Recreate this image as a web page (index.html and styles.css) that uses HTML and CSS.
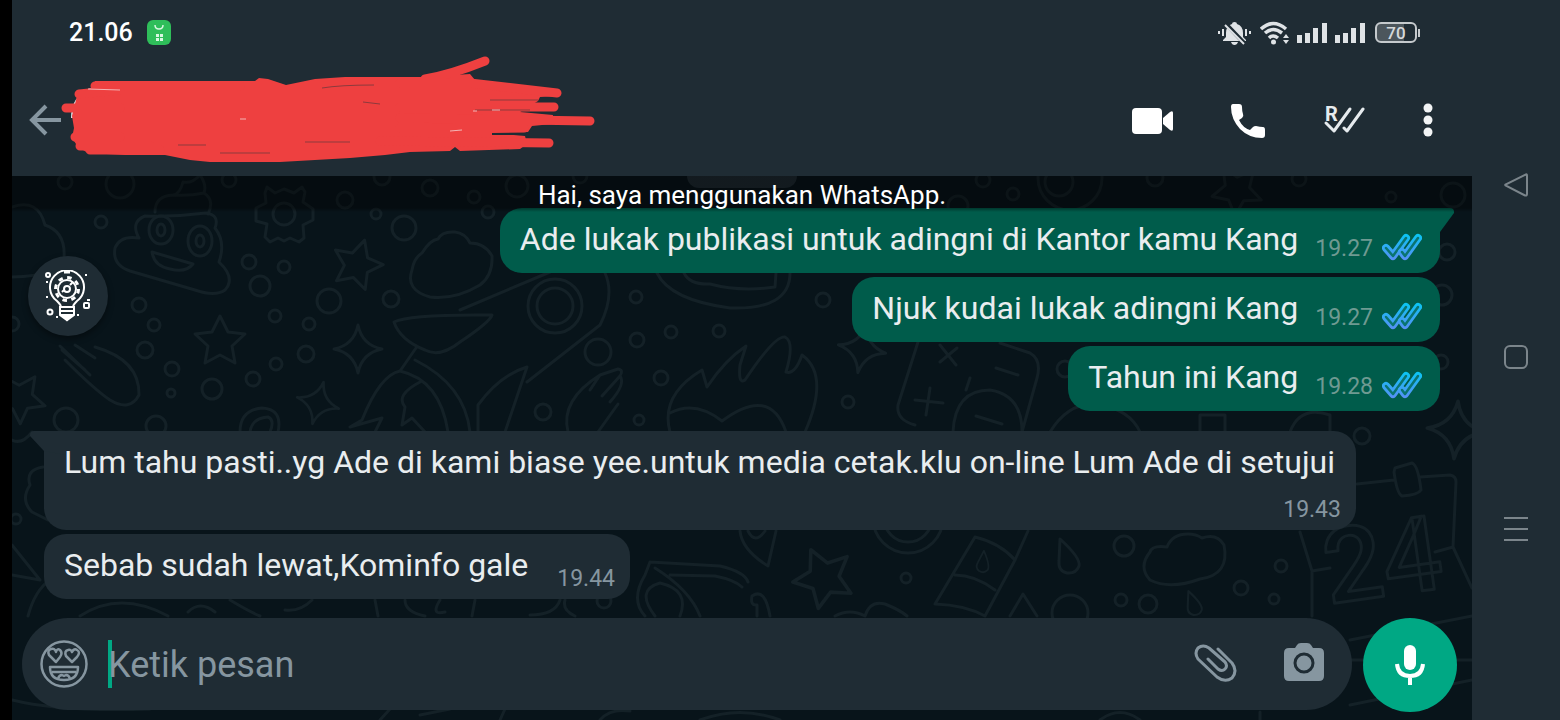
FILE: index.html
```html
<!DOCTYPE html>
<html lang="id">
<head>
  <meta charset="UTF-8" />
  <meta name="viewport" content="width=device-width, initial-scale=1.0" />
  <title>WhatsApp</title>
  <link rel="stylesheet" href="styles.css">
</head>
<body>

  <!-- Shared shapes -->
  <svg class="defs" aria-hidden="true">
    <defs>
      <linearGradient id="tick-blue" gradientUnits="userSpaceOnUse" x1="0" y1="0" x2="0" y2="28">
        <stop offset="0" stop-color="#06c8f2" />
        <stop offset="1" stop-color="#5b8df5" />
      </linearGradient>
      <symbol id="ticks" viewBox="0 0 40 28">
        <g fill="none" stroke-linecap="round" stroke-linejoin="round">
          <path d="M4 15L11 23L24 5" stroke="url(#tick-blue)" stroke-width="8" />
          <path d="M4 15L11 23L24 5" stroke="#0a7470" stroke-width="2.500" />
          <path d="M20 19L23 23L36 5" stroke="url(#tick-blue)" stroke-width="8" />
          <path d="M20 19L23 23L36 5" stroke="#0a7470" stroke-width="2.500" />
        </g>
      </symbol>
      <symbol id="signal" viewBox="0 0 30 22">
        <path fill="#dfe3e6" d="M0 13h5v8H0zM8 11h5v10H8zM16 6h5v15h-5zM25 1h5v20h-5z" />
      </symbol>
      <path id="star" d="M0-26L8-10L25-8L12 4L15 21L0 13L-15 21L-12 4L-25-8L-8-10Z" />
      <path id="spark" d="M0-24Q4-4 24 0Q4 4 0 24Q-4 4-24 0Q-4-4 0-24Z" />
      <path id="drop" d="M-8-17Q13 2 11 10Q8 18-1 17Q-10 15-9 5Z" />
    </defs>
  </svg>

  <div class="app">
    <header class="header">
      <div class="status-bar">
        <span class="clock">21.06</span>
        <svg class="notif" width="24" height="26" viewBox="0 0 24 26">
          <rect width="24" height="25" rx="6" fill="#2fbe5a" />
          <path d="M8 5Q8 9 12 9Q16 9 16 5" fill="none" stroke="#d9f7e2" stroke-width="1.5" />
          <path d="M9 14h3v3H9zM13 14h3v3h-3zM9 18h3v3H9zM13 18h3v3h-3z" fill="#d9f7e2" />
        </svg>
        <div class="status-icons">
          <svg width="33" height="24" viewBox="0 0 33 24">
            <path d="M16.500 1Q19 1 19 3Q25 5 25 12V16L28 19V20H5V19L8 16V12Q8 5 14 3Q14 1 16.500 1ZM13 21h7q-1 3-3.500 3T13 21Z" fill="#dfe3e6" />
            <path d="M7 2L28 24" stroke="#1f2c34" stroke-width="4" />
            <path d="M7 4L26 23" stroke="#dfe3e6" stroke-width="2" />
            <path d="M5 8v7M28 8v7M1 10v3M32 10v3" stroke="#dfe3e6" stroke-width="2" />
          </svg>
          <svg class="wifi" width="31" height="24" viewBox="0 0 31 24">
            <g fill="none" stroke="#dfe3e6" stroke-width="3.500">
              <path d="M1 8Q13-3 26 8" />
              <path d="M5 12Q13 5 22 12" />
              <path d="M9 17Q13 13 18 17" />
            </g>
            <circle cx="13.500" cy="21" r="2.500" fill="#dfe3e6" />
            <path d="M23 17l3-4 3 4zM23 19l3 4 3-4z" fill="#dfe3e6" />
          </svg>
          <svg class="bars" width="30" height="22"><use href="#signal" /></svg>
          <svg class="bars" width="30" height="22"><use href="#signal" /></svg>
          <span class="battery">70</span>
        </div>
      </div>

      <div class="toolbar">
        <button class="back" aria-label="Kembali">
          <svg width="32" height="32" viewBox="0 0 32 32" fill="none" stroke="#8696a0" stroke-width="4">
            <path d="M32 16H3M17 2L3 16L17 30" />
          </svg>
        </button>
        <div class="actions">
          <button aria-label="Panggilan video">
            <svg width="41" height="28" viewBox="0 0 41 28" fill="#fff">
              <rect y="2" width="30" height="26" rx="4" />
              <path d="M31 12L38 6Q41 4 41 7V23Q41 26 38 24L31 18Z" />
            </svg>
          </button>
          <button aria-label="Panggilan suara">
            <svg width="36" height="36" viewBox="0 0 36 36" fill="#fff">
              <path d="M3 2H9Q12 2 12 5Q12 9 13 12Q14 14 12 16L9 18Q13 26 20 28L23 25Q24 24 26 24Q30 25 33 25Q35 25 35 28V33Q35 36 32 36Q19 36 10 27Q1 17 1 5Q1 2 3 2Z" />
            </svg>
          </button>
          <button aria-label="Tanda dibaca">
            <svg width="42" height="42" viewBox="0 -6 42 42">
              <text class="tick-letter" x="2" y="16">R</text>
              <g fill="none" stroke="#e6ebee" stroke-width="3" stroke-linecap="round" stroke-linejoin="round">
                <path d="M3 18L11 26L27 4" />
                <path d="M21 23L24 26L40 4" />
              </g>
            </svg>
          </button>
          <button class="more" aria-label="Menu">
            <svg width="10" height="34" viewBox="0 0 10 34" fill="#f2f4f5">
              <circle cx="5" cy="5" r="4.500" /><circle cx="5" cy="17" r="4.500" /><circle cx="5" cy="29" r="4.500" />
            </svg>
          </button>
        </div>
      </div>

      <!-- Name covered by marker strokes -->
      <svg class="scribble" width="540" height="112" viewBox="60 54 540 112" aria-hidden="true">
        <path d="M72 118Q72 97 91 89" fill="none" stroke="#dfe5e8" stroke-width="2" />
        <path fill="#ee4040" d="M78 92L92 88L95 81L255 81L259 78L268 79L286 85L315 79L345 77L425 77L470 74L475 80L510 84L560 90L560 96L540 97L538 101L520 112L553 115L552 124L532 126L528 132L492 133L525 136L527 144L520 149L460 151L455 147L450 151L410 152L385 155L350 158L280 162L210 162L190 160L165 155L125 155L88 153L78 147L72 138L74 128L72 116Z" />
        <g fill="none" stroke="#ee4040" stroke-width="9" stroke-linecap="round" stroke-linejoin="round">
          <path d="M425 79Q450 75 485 61" />
          <path d="M95 86H240M66 108H120M79 94L120 90M75 137H120M80 146H150M90 150H160" />
          <path d="M400 83L470 83L557 93" />
          <path d="M400 107H554M400 118L590 121M400 128H524M380 141L549 143" />
        </g>
        <g fill="none" stroke="#8d3a3d" stroke-width="1">
          <path d="M322 88Q340 85 374 85M363 102L380 104M178 145H206M220 153H270M305 142H350M490 100H538M475 110H530" />
        </g>
        <path d="M492 134L526 134" stroke="#1f2c34" stroke-width="2" />
        <path d="M88 89L120 90M450 131L462 130M492 110H500M473 111H477M240 119H246" stroke="#f3b5b5" stroke-width="1" />
      </svg>
    </header>

    <main class="chat">
      <svg class="wallpaper" viewBox="12 176 1460 544" preserveAspectRatio="xMinYMin slice" aria-hidden="true">
        <rect x="687" y="150" width="110" height="38" rx="12" class="chip" />
        <g class="doodles">
          <!-- small bubbles -->
          <circle cx="65" cy="182" r="7" /><circle cx="120" cy="184" r="14" /><circle cx="101" cy="222" r="6" />
          <circle cx="229" cy="180" r="7" /><circle cx="345" cy="200" r="8" /><circle cx="376" cy="214" r="5" />
          <circle cx="382" cy="177" r="8" /><circle cx="430" cy="188" r="8" /><circle cx="474" cy="197" r="6" />
          <circle cx="488" cy="212" r="6" /><circle cx="404" cy="228" r="12" /><circle cx="249" cy="262" r="7" />
          <circle cx="284" cy="267" r="6" /><circle cx="260" cy="286" r="10" /><circle cx="329" cy="301" r="12" />
          <circle cx="391" cy="299" r="8" /><circle cx="275" cy="316" r="6" /><circle cx="309" cy="324" r="6" />
          <circle cx="139" cy="305" r="7" /><circle cx="154" cy="325" r="6" /><circle cx="145" cy="350" r="8" />
          <circle cx="172" cy="369" r="7" /><circle cx="171" cy="393" r="4" /><circle cx="212" cy="389" r="10" />
          <circle cx="306" cy="354" r="8" /><circle cx="276" cy="364" r="6" /><circle cx="253" cy="379" r="7" />
          <circle cx="66" cy="420" r="12" /><circle cx="156" cy="426" r="10" /><circle cx="12" cy="324" r="7" />
          <circle cx="517" cy="186" r="11" /><circle cx="580" cy="176" r="7" /><circle cx="555" cy="306" r="27" />
          <circle cx="555" cy="306" r="18" /><circle cx="636" cy="297" r="6" /><circle cx="637" cy="340" r="7" />
          <circle cx="671" cy="332" r="6" /><circle cx="719" cy="331" r="6" /><circle cx="598" cy="352" r="13" />
          <circle cx="661" cy="378" r="7" /><circle cx="543" cy="412" r="8" /><circle cx="639" cy="420" r="5" />
          <circle cx="823" cy="300" r="7" /><circle cx="848" cy="402" r="6" /><circle cx="958" cy="206" r="10" />
          <circle cx="983" cy="180" r="7" /><circle cx="1013" cy="194" r="6" /><circle cx="1059" cy="182" r="14" />
          <circle cx="1070" cy="178" r="32" /><circle cx="1155" cy="178" r="8" /><circle cx="1299" cy="179" r="7" />
          <circle cx="1391" cy="197" r="5" /><circle cx="1453" cy="195" r="12" /><circle cx="1447" cy="252" r="8" />
          <circle cx="1442" cy="295" r="10" /><circle cx="1441" cy="362" r="7" /><circle cx="1065" cy="369" r="8" />
          <circle cx="906" cy="578" r="5" /><circle cx="1124" cy="546" r="10" /><circle cx="1281" cy="566" r="6" />
          <circle cx="1241" cy="588" r="7" /><circle cx="1121" cy="600" r="6" /><circle cx="1148" cy="604" r="9" />
          <circle cx="1274" cy="599" r="5" /><circle cx="1362" cy="436" r="8" /><circle cx="1070" cy="613" r="18" />
          <circle cx="604" cy="601" r="7" /><circle cx="908" cy="518" r="35" /><circle cx="908" cy="518" r="24" />
          <circle cx="16" cy="519" r="5" />
          <!-- stars -->
          <use href="#star" transform="translate(357 265) rotate(17)" />
          <use href="#star" transform="translate(220 342)" />
          <use href="#star" transform="translate(20 398) rotate(35)" />
          <use href="#star" transform="translate(1237 190) rotate(40)" />
          <use href="#star" transform="translate(824 578) rotate(-25) scale(1.200)" />
          <use href="#spark" transform="translate(358 349)" />
          <use href="#spark" transform="translate(318 403) rotate(15) scale(.9)" />
          <use href="#spark" transform="translate(862 349) rotate(10)" />
          <use href="#spark" transform="translate(1456 430) rotate(4) scale(1.200)" />
          <use href="#drop" transform="translate(1068 556)" />
          <use href="#drop" transform="translate(1194 603) scale(.7)" />
          <use href="#drop" transform="translate(984 562) rotate(25) scale(.6)" />
          <!-- clouds -->
          <path d="M12 207Q38 198 45 225Q66 232 64 258Q60 276 12 277" />
          <path d="M422 253Q430 240 438 239Q442 231 455 232Q465 233 470 243Q485 243 492 256Q493 275 480 285Q455 300 430 297Q405 290 412 270Q414 258 422 253Z" />
          <path d="M1150 552Q1152 545 1167 547Q1172 534 1188 534Q1196 534 1202 538Q1217 533 1224 545Q1230 575 1200 579Q1170 590 1150 580Q1138 567 1150 552Z" />
          <path d="M43 467Q25 470 30 485Q20 500 32 512L48 520" />
          <!-- smiling pile -->
          <path d="M173 195Q180 194 183 182Q192 184 200 175Q207 185 204 193Q190 196 173 195ZM173 195Q155 196 155 212M204 193Q215 200 208 214M139 238Q130 222 145 216Q175 217 206 213Q220 215 215 228Q226 242 219 262Q236 278 225 290Q215 297 195 290L130 271Q112 265 115 248Q120 235 139 238Z" />
          <ellipse cx="161" cy="230" rx="12" ry="14" /><ellipse cx="161" cy="230" rx="4" ry="6" />
          <ellipse cx="200" cy="241" rx="12" ry="15" /><ellipse cx="200" cy="241" rx="4" ry="6" />
          <path d="M152 252L193 264Q186 273 170 269Q154 266 152 252Z" />
          <!-- gear -->
          <circle cx="284" cy="214" r="11" />
          <path d="M267 187L275 193L284 189L294 193L302 187L305 192L303 202L313 209V220L303 225L304 238L299 242L290 238L284 241L278 238L270 242L265 237L267 224L256 221V208L266 203L265 193Z" />
          <!-- hand, rings and bird -->
          <path d="M62 350L85 370M75 345L95 358M60 346L90 375M65 360Q95 390 110 400Q130 412 139 395Q140 360 95 347" />
          <path d="M240 432Q240 410 262 408Q283 409 278 432M250 432Q252 418 268 417Q275 420 270 432" />
          <path d="M394 322Q410 314 492 315Q490 322 460 342Q440 358 425 350Q400 340 394 322ZM416 348L400 371Q380 375 362 420L350 427L382 418L375 432M415 360Q465 385 470 432M400 371Q440 380 448 432M420 382Q395 395 405 407L402 425L412 418L425 432M478 432V405Q500 375 527 367L505 432M527 382L600 325Q615 295 605 273M460 310L550 272" />
          <path d="M568 432Q560 400 600 375L590 390M600 375L618 369Q624 370 620 376L602 396M620 376Q626 384 610 402M598 432L618 404" />
          <!-- flame and face -->
          <path d="M657 273Q670 300 730 308Q790 310 790 273M684 273Q690 285 710 284Q740 292 775 287L776 273" />
          <path d="M670 432Q660 395 702 370L707 387Q725 360 746 346L740 365Q738 385 745 380Q775 335 785 337Q795 342 786 372Q795 375 802 355Q830 375 805 432M670 413Q695 400 722 421Q770 385 786 432" />
          <!-- calculator -->
          <path d="M918 342L898 405Q896 420 915 425M1000 343L1030 353Q1042 360 1037 378L1022 432M996 368L1018 375M976 416L1002 424M940 345L956 365M957 348L940 362M930 388L926 415M915 400L943 403M953 432Q955 390 990 390Q1022 395 1022 432M970 378L966 390" />
          <path d="M1050 432Q1070 400 1100 405Q1130 410 1140 432M1200 432V415H1225V432M1290 432Q1300 405 1330 415V432" />
          <!-- lower row -->
          <path d="M12 545L40 580L12 575M32 432Q22 445 12 440M28 616Q35 590 50 580M80 616Q120 590 168 616M188 612Q200 600 215 612M230 600Q250 612 260 616M285 610Q300 612 312 600M375 600L378 616M405 600Q405 612 425 616M440 600Q430 616 445 612M475 600L472 616M530 615Q555 615 560 600M565 600Q562 610 575 616" />
          <path d="M650 562L720 566Q745 572 748 582M650 562L645 575Q630 600 645 616M655 568Q690 590 700 616M655 616Q635 590 660 583Q690 590 680 616M670 575L715 576Q735 580 742 587M752 596Q765 587 770 616M752 596Q750 606 757 605V616M740 531Q742 550 768 566L776 531M748 531Q755 545 765 531M835 616Q850 608 865 616Q870 600 885 604Q900 610 907 616" />
          <path d="M975 537Q1000 543 1015 560L1028 531M975 537L935 604Q965 605 985 616L1015 560M955 575Q975 575 995 590M1010 616L1023 594L1037 616" />
          <!-- calendar -->
          <path d="M1357 484L1394 480M1420 477L1450 475Q1456 476 1456 482L1453 547L1472 588M1300 532L1312 571L1330 568M1435 552L1453 547M1312 571V616M1395 468L1412 463Q1418 465 1421 490Q1418 495 1402 496Q1397 494 1394 472Z" />
          <path d="M1350 640L1472 616M1350 660H1472M1350 705L1472 680M1100 720Q1120 705 1140 720M1260 720V712M700 720Q740 705 780 720M500 720L505 709M600 720Q610 708 630 711M12 700Q60 712 150 709M380 720L390 709M420 715L450 709" />
          <text class="date" transform="translate(1329 604) rotate(-8)">24</text>
        </g>
      </svg>

      <p class="about">Hai, saya menggunakan WhatsApp.</p>

      <div class="messages">
        <div class="bubble sent tail">
          <p>Ade lukak publikasi untuk adingni di Kantor kamu Kang</p>
          <time>19.27</time>
          <svg class="read" width="40" height="28"><use href="#ticks" /></svg>
        </div>
        <div class="bubble sent">
          <p>Njuk kudai lukak adingni Kang</p>
          <time>19.27</time>
          <svg class="read" width="40" height="28"><use href="#ticks" /></svg>
        </div>
        <div class="bubble sent">
          <p>Tahun ini Kang</p>
          <time>19.28</time>
          <svg class="read" width="40" height="28"><use href="#ticks" /></svg>
        </div>
        <div class="bubble received tail long">
          <p>Lum tahu pasti..yg Ade di kami biase yee.untuk media cetak.klu on-line Lum Ade di setujui</p>
          <time>19.43</time>
        </div>
        <div class="bubble received">
          <p>Sebab sudah lewat,Kominfo gale</p>
          <time>19.44</time>
        </div>
      </div>

      <!-- Floating shortcut -->
      <button class="idea" aria-label="Fitur tambahan">
        <svg width="48" height="52" viewBox="0 0 48 52" fill="none" stroke="#fff" stroke-width="2">
          <path d="M17 36Q16 34 13 31A17 17 0 1 1 33 31Q30 34 29 36" />
          <path d="M20 2H26" stroke-width="3" />
          <circle cx="23" cy="19" r="9" />
          <circle cx="23" cy="19" r="11.500" stroke-width="3" stroke-dasharray="4.500 4.500" />
          <circle cx="23" cy="19" r="3" />
          <path d="M26 15L29 12M18 22L20 20" />
          <path d="M16 37V45L20 48L23 50L26 48L30 45V37ZM16 41H30M16 45H30" />
          <path d="M20 47H26L23 50Z" fill="#fff" />
          <circle cx="4" cy="5" r="2" /><circle cx="6" cy="42" r="2.500" /><rect x="40" y="33" width="5" height="5" rx="1" />
          <path d="M41 5h2M2 12h2M2 27h2M33 45h2M12 47h2M43 30h3" />
        </svg>
      </button>

      <form class="composer">
        <div class="field">
          <button type="button" aria-label="Emoji">
            <svg width="50" height="50" viewBox="0 0 50 50" fill="none" stroke="#8696a0" stroke-width="2.500" stroke-linejoin="round">
              <circle cx="25" cy="25" r="22.500" />
              <path d="M17 23L10 16Q8 11 12 10Q16 9 17 13Q18 9 21 11Q24 14 21 18Z" />
              <path d="M33 23L27 17Q25 12 29 11Q32 10 33 13Q35 9 38 11Q42 13 38 18Z" />
              <path d="M11 28H39Q39 41 25 41Q11 41 11 28ZM13 33H37M19 40Q20 36 23 36L25 37L27 36Q30 36 31 40" />
            </svg>
          </button>
          <span class="caret"></span>
          <input type="text" placeholder="Ketik pesan" aria-label="Ketik pesan">
          <button type="button" aria-label="Lampirkan">
            <svg width="44" height="40" viewBox="0 0 44 40" fill="none" stroke="#8696a0" stroke-width="3" stroke-linecap="round" stroke-linejoin="round">
              <path d="M24 5L38 19Q44 27 38 34Q31 39 23 33L4 15Q0 9 4 4Q9 0 15 4L31 18Q34 22 31 25Q28 28 24 25L14 15" />
            </svg>
          </button>
          <button type="button" aria-label="Kamera">
            <svg width="40" height="42" viewBox="0 0 40 42">
              <path d="M13 2Q14 0 17 0H23Q26 0 27 2L29 5H35Q40 5 40 10V33Q40 38 35 38H5Q0 38 0 33V10Q0 5 5 5H11Z" fill="#8696a0" />
              <circle cx="20" cy="20" r="9" fill="none" stroke="#1f2c34" stroke-width="3" />
            </svg>
          </button>
        </div>
        <button type="button" class="mic" aria-label="Rekam suara">
          <svg width="32" height="42" viewBox="0 0 32 42">
            <rect x="10" y="1" width="12" height="25" rx="6" fill="#fff" />
            <path d="M3 20Q4 32 16 32Q28 32 29 20M16 32V41" fill="none" stroke="#fff" stroke-width="4" />
          </svg>
        </button>
      </form>
    </main>
  </div>

  <!-- System navigation -->
  <nav class="system-nav">
    <button aria-label="Kembali sistem">
      <svg width="24" height="24" viewBox="0 0 24 24"><path d="M22 1.500Q23 1 23 3V21Q23 23 21 22.500L1.500 12.500Q1 12 1.500 11.500Z" /></svg>
    </button>
    <button aria-label="Beranda">
      <svg width="24" height="24" viewBox="0 0 24 24"><rect x="1" y="1" width="22" height="22" rx="5" /></svg>
    </button>
    <button aria-label="Aplikasi terbaru">
      <svg width="24" height="24" viewBox="0 0 24 24"><path d="M0 1H24M0 12H24M0 23H24" /></svg>
    </button>
  </nav>

</body>
</html>
```
FILE: styles.css
```css
* {
  box-sizing: border-box;
}

body {
  margin: 0;
  height: 100vh;
  display: flex;
  padding-left: 12px;
  background: #000;
  overflow: hidden;
  font-family: Roboto, "Liberation Sans", sans-serif;
}

p {
  margin: 0;
}

button {
  display: flex;
  align-items: center;
  justify-content: center;
  padding: 0;
  border: 0;
  background: none;
  font: inherit;
  cursor: pointer;
}

svg {
  display: block;
  flex: none;
}

.defs {
  position: absolute;
  width: 0;
  height: 0;
}

.app {
  flex: 1;
  min-width: 0;
  display: flex;
  flex-direction: column;
}

/* Header */
.header {
  position: relative;
  background: #1f2c34;
}

.status-bar {
  display: flex;
  align-items: center;
  height: 64px;
  padding: 1px 52px 0 57px;
}

.clock {
  color: #fff;
  font-size: 25px;
  font-weight: 500;
}

.notif {
  margin-left: 14px;
}

.status-icons {
  display: flex;
  align-items: center;
  margin-left: auto;
}

.wifi {
  margin-left: 9px;
}

.bars {
  margin-left: 6px;
}

.bars + .bars {
  margin-left: 8px;
}

.battery {
  position: relative;
  width: 42px;
  height: 21px;
  margin: 0 3px 0 10px;
  border: 2px solid #c5cacd;
  border-radius: 6px;
  background: linear-gradient(90deg, #4c565c 70%, #1f2c34 70%);
  color: #d5d9db;
  font-size: 17px;
  font-weight: 500;
  line-height: 18px;
  text-align: center;
}

.battery::after {
  content: "";
  position: absolute;
  right: -5px;
  top: 5px;
  width: 2px;
  height: 8px;
  background: #c5cacd;
}

.toolbar {
  display: flex;
  align-items: center;
  height: 112px;
  padding: 0 8px 0 17px;
}

.actions {
  display: flex;
  margin-left: auto;
}

.actions button {
  width: 96px;
  height: 64px;
}

.actions .more {
  width: 72px;
}

.tick-letter {
  fill: #e6ebee;
  font-size: 20px;
  font-weight: 700;
}

.scribble {
  position: absolute;
  left: 48px;
  top: 54px;
}

/* Chat */
.chat {
  position: relative;
  flex: 1;
  display: flex;
  flex-direction: column;
  background: #08141a;
  overflow: hidden;
}

.wallpaper {
  position: absolute;
  inset: 0;
  width: 100%;
  height: 100%;
}

.doodles {
  fill: none;
  stroke: #142127;
  stroke-width: 3;
  stroke-linejoin: round;
  stroke-linecap: round;
}

.chip {
  fill: #1f2c34;
}

.date {
  font-size: 104px;
  font-weight: 500;
}

.about {
  position: relative;
  z-index: 1;
  height: 32px;
  color: #fff;
  font-size: 26px;
  line-height: 38px;
  text-align: center;
}

.about::before {
  content: "";
  position: absolute;
  z-index: -1;
  inset: 0 0 -4px;
  background: linear-gradient(rgba(0, 0, 0, 0.4) 32px, rgba(0, 0, 0, 0));
}

.messages {
  position: relative;
  flex: 1;
  display: flex;
  flex-direction: column;
  gap: 4px;
  padding: 0 32px;
}

.bubble {
  position: relative;
  display: flex;
  align-items: flex-end;
  min-height: 65px;
  border-radius: 22px;
  font-size: 32px;
  line-height: 40px;
  color: #e9edef;
}

.bubble p {
  padding: 11px 0 14px;
}

.bubble time {
  color: #8696a0;
  font-size: 23px;
  line-height: 28px;
}

.sent {
  align-self: flex-end;
  padding: 0 18px 0 20px;
  background: #005c4b;
}

.sent time {
  margin-left: 17px;
  padding-bottom: 10px;
  color: #6f9a92;
}

.read {
  margin: 0 0 12px 9px;
}

.received {
  align-self: flex-start;
  padding: 0 15px 0 20px;
  background: #1f2c34;
}

.received time {
  margin-left: 29px;
  padding-bottom: 6px;
}

.long {
  flex-direction: column;
  margin-top: 16px;
}

.long p {
  padding: 11px 6px 14px 0;
}

.tail::before {
  content: "";
  position: absolute;
  top: 0;
  width: 36px;
  height: 24px;
  background: inherit;
}

.sent.tail {
  border-top-right-radius: 0;
}

.sent.tail::before {
  right: -14px;
  border-top-right-radius: 4px;
  clip-path: polygon(0 0, 100% 0, 100% 5px, 22px 100%, 0 100%);
}

.received.tail {
  min-height: 99px;
  border-top-left-radius: 0;
}

.received.tail::before {
  left: -14px;
  border-top-left-radius: 4px;
  clip-path: polygon(0 0, 100% 0, 100% 100%, 14px 20px, 0 5px);
}

.idea {
  position: absolute;
  left: 16px;
  top: 80px;
  width: 80px;
  height: 80px;
  border-radius: 50%;
  background: #1f2c34;
  box-shadow: 0 3px 6px rgba(0, 0, 0, 0.4);
}

/* Composer */
.composer {
  position: relative;
  display: flex;
  gap: 11px;
  padding: 0 15px 8px 10px;
}

.field {
  flex: 1;
  display: flex;
  align-items: center;
  height: 92px;
  padding: 0 28px 0 17px;
  border-radius: 46px;
  background: #1f2c34;
}

.caret {
  width: 4px;
  height: 48px;
  margin: 0 -4px 0 19px;
  background: #00a884;
}

.field input {
  flex: 1;
  min-width: 0;
  padding: 2px 0 0;
  border: 0;
  outline: 0;
  background: none;
  color: #e9edef;
  font: inherit;
  font-size: 36px;
}

.field input::placeholder {
  color: #8696a0;
  opacity: 1;
}

.field input + button {
  margin-right: 46px;
}

.mic {
  width: 94px;
  height: 94px;
  border-radius: 50%;
  background: #00a884;
}

/* System navigation */
.system-nav {
  width: 88px;
  display: flex;
  flex-direction: column;
  align-items: center;
  justify-content: center;
  gap: 148px;
  padding-bottom: 6px;
  background: #1f2c34;
}

.system-nav svg {
  fill: none;
  stroke: #7b858b;
  stroke-width: 2;
}
```
